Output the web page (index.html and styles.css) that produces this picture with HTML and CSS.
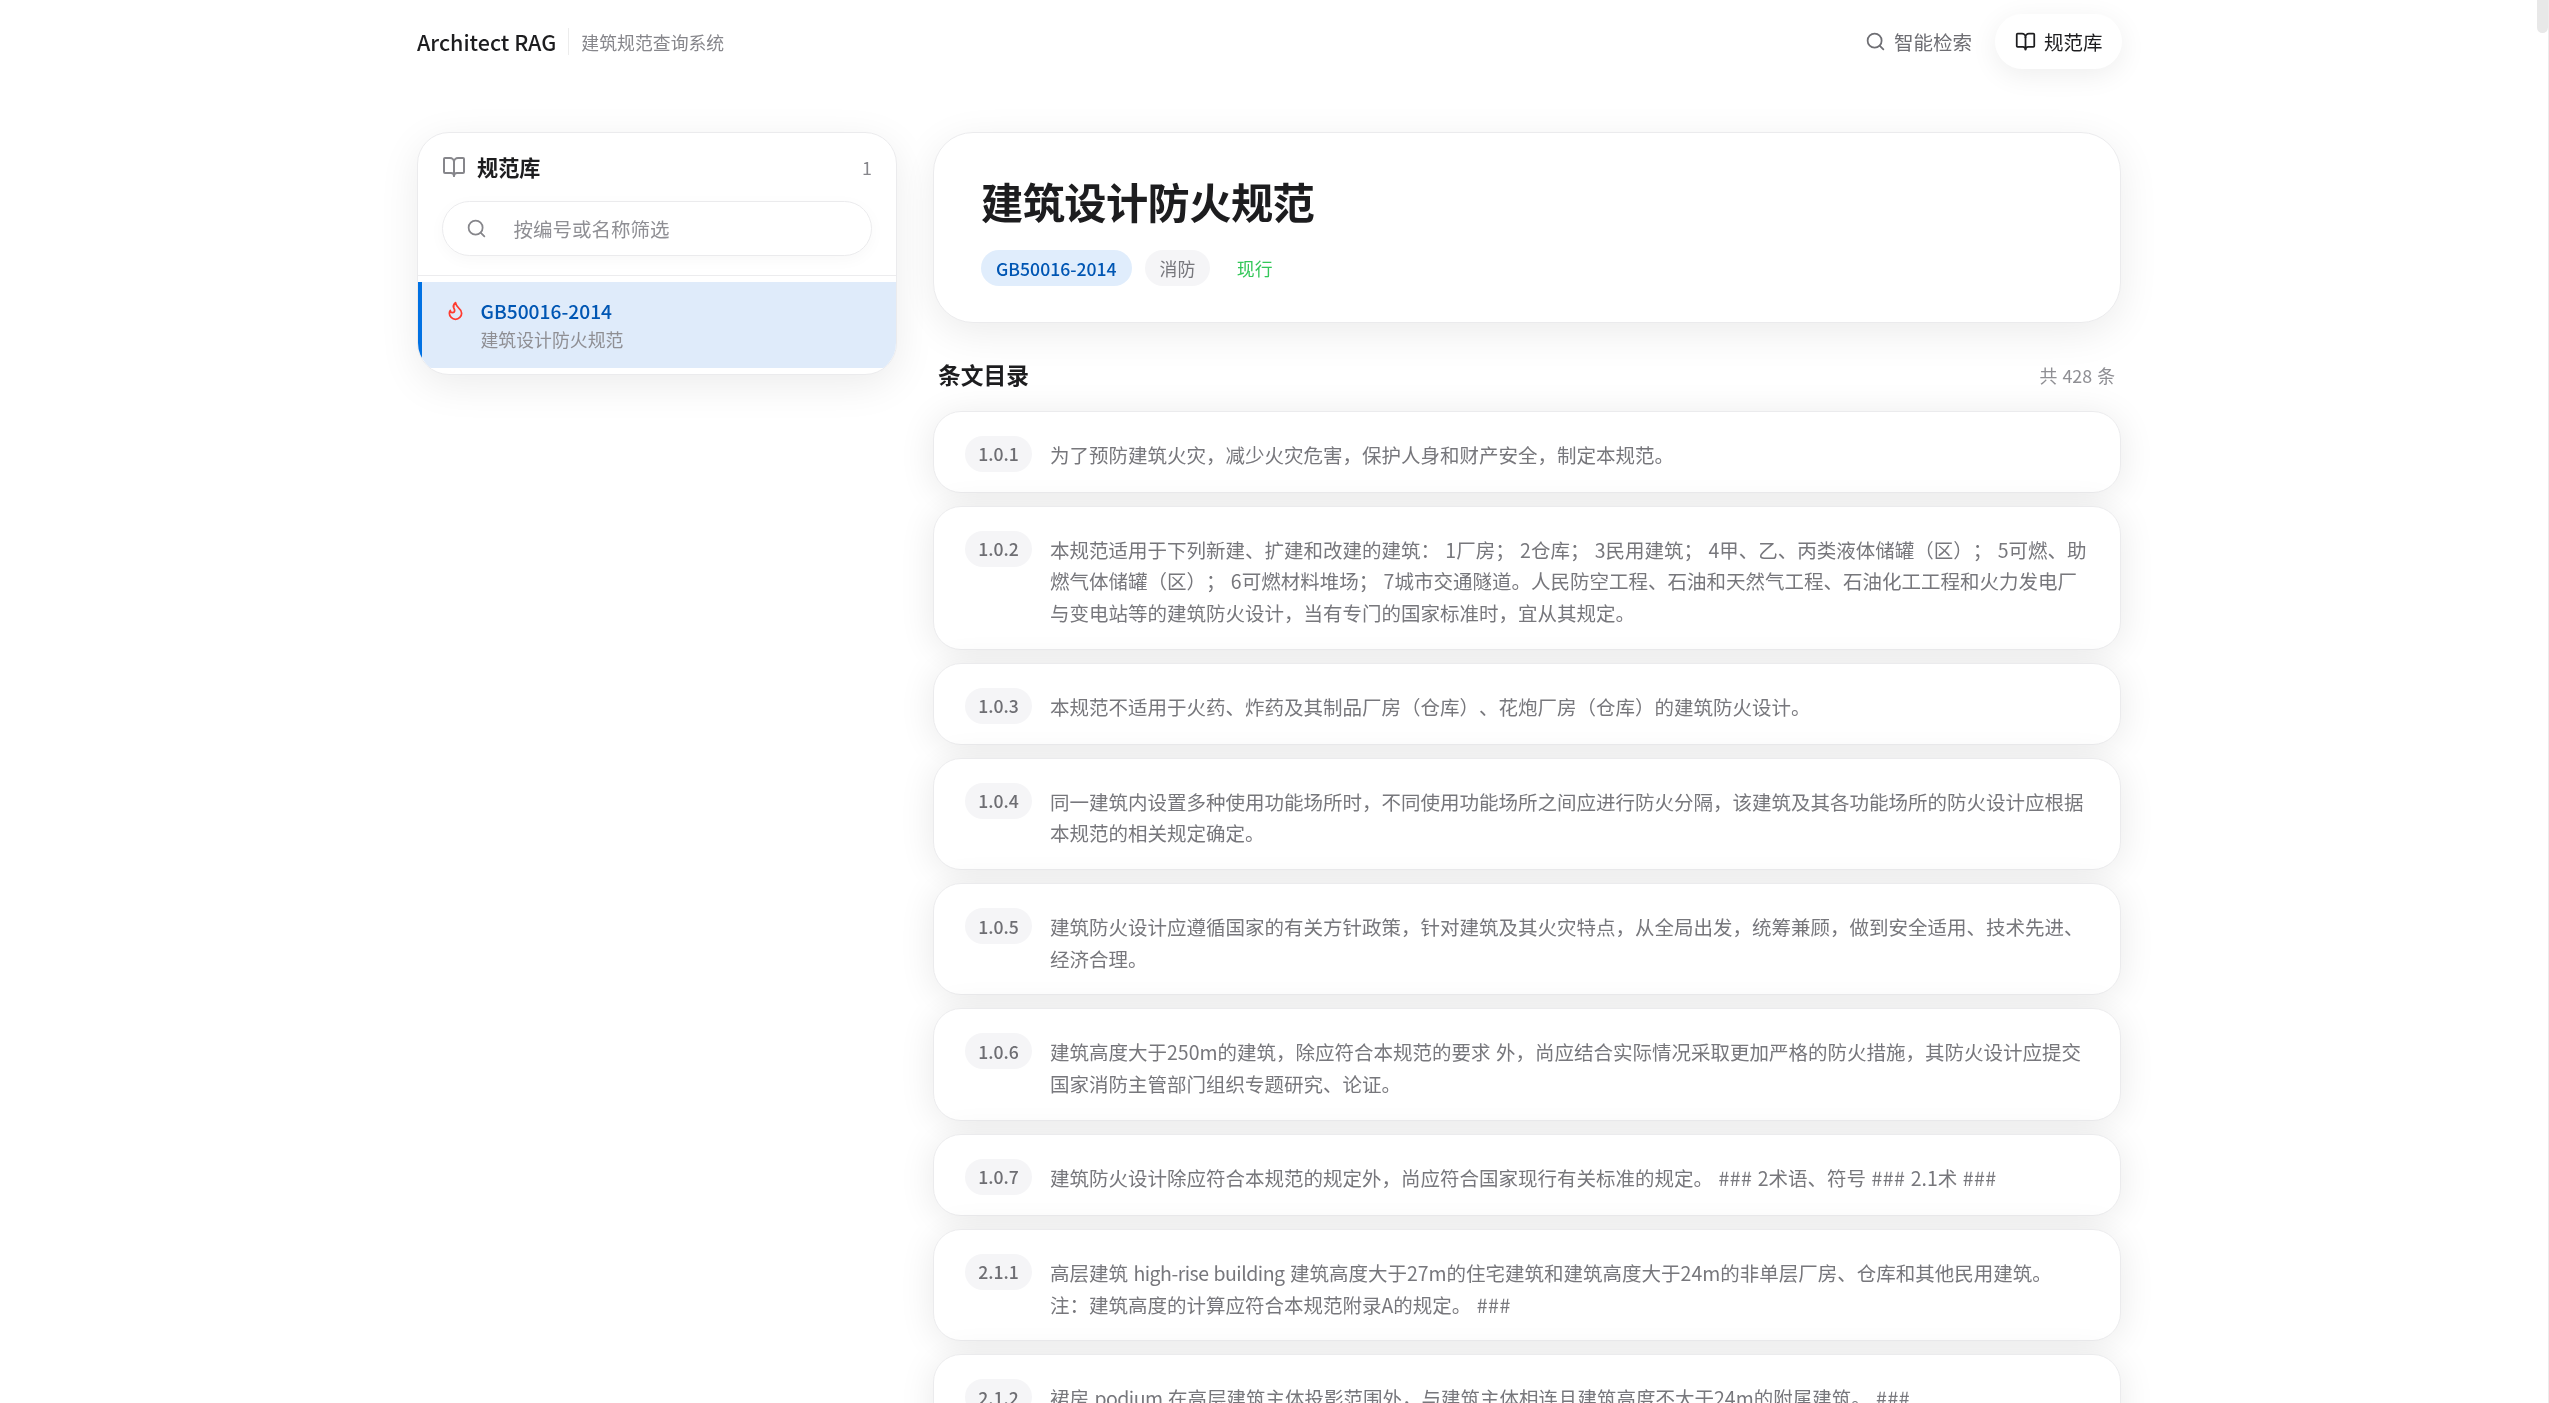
FILE: index.html
```html
<!DOCTYPE html>
<html lang="zh-CN">
<head>
<meta charset="utf-8">
<title>Architect RAG</title>
<link rel="stylesheet" href="styles.css">
</head>
<body>
<div class="scrollbar"><div class="scrollbar-thumb"></div></div>
<div class="page">
  <header class="topbar">
    <div class="brand">
      <span class="brand-name">Architect RAG</span>
      <span class="brand-sub">建筑规范查询系统</span>
    </div>
    <nav class="nav">
      <a class="nav-item">
        <svg class="icon icon-nav" viewBox="0 0 24 24"><circle cx="11" cy="11" r="8"/><path d="m21 21-4.3-4.3"/></svg>
        <span>智能检索</span>
      </a>
      <a class="nav-item nav-item-active">
        <svg class="icon icon-nav" viewBox="0 0 24 24"><path d="M12 7v14"/><path d="M3 18a1 1 0 0 1-1-1V4a1 1 0 0 1 1-1h5a4 4 0 0 1 4 4 4 4 0 0 1 4-4h5a1 1 0 0 1 1 1v13a1 1 0 0 1-1 1h-6a3 3 0 0 0-3 3 3 3 0 0 0-3-3z"/></svg>
        <span>规范库</span>
      </a>
    </nav>
  </header>

  <div class="layout">
    <aside class="side">
      <div class="side-head">
        <div class="side-title-row">
          <div class="side-title">
            <svg class="icon icon-side" viewBox="0 0 24 24"><path d="M12 7v14"/><path d="M3 18a1 1 0 0 1-1-1V4a1 1 0 0 1 1-1h5a4 4 0 0 1 4 4 4 4 0 0 1 4-4h5a1 1 0 0 1 1 1v13a1 1 0 0 1-1 1h-6a3 3 0 0 0-3 3 3 3 0 0 0-3-3z"/></svg>
            <span>规范库</span>
          </div>
          <span class="side-count">1</span>
        </div>
        <div class="filter">
          <svg class="icon icon-filter" viewBox="0 0 24 24"><circle cx="11" cy="11" r="8"/><path d="m21 21-4.3-4.3"/></svg>
          <span class="filter-placeholder">按编号或名称筛选</span>
        </div>
      </div>
      <div class="side-list">
        <div class="side-item">
          <svg class="icon icon-flame" viewBox="0 0 24 24"><path d="M8.5 14.5A2.5 2.5 0 0 0 11 12c0-1.38-.5-2-1-3-1.072-2.143-.224-4.054 2-6 .5 2.5 2 4.9 4 6.5 2 1.6 3 3.5 3 5.5a7 7 0 1 1-14 0c0-1.153.433-2.294 1-3a2.5 2.5 0 0 0 2.5 2.5z"/></svg>
          <div class="side-item-text">
            <div class="side-item-code">GB50016-2014</div>
            <div class="side-item-name">建筑设计防火规范</div>
          </div>
        </div>
      </div>
    </aside>

    <main class="main">
      <section class="hero">
        <h1 class="hero-title">建筑设计防火规范</h1>
        <div class="tags">
          <span class="tag tag-code">GB50016-2014</span>
          <span class="tag tag-cat">消防</span>
          <span class="tag tag-status">现行</span>
        </div>
      </section>

      <div class="toc-head">
        <h2 class="toc-title">条文目录</h2>
        <span class="toc-count">共 428 条</span>
      </div>

      <div class="rows">
        <article class="row"><span class="row-num">1.0.1</span><p class="row-text">为了预防建筑火灾，减少火灾危害，保护人身和财产安全，制定本规范。</p></article>
        <article class="row"><span class="row-num">1.0.2</span><p class="row-text">本规范适用于下列新建、扩建和改建的建筑： 1厂房； 2仓库； 3民用建筑； 4甲、乙、丙类液体储罐（区）； 5可燃、助燃气体储罐（区）； 6可燃材料堆场； 7城市交通隧道。人民防空工程、石油和天然气工程、石油化工工程和火力发电厂与变电站等的建筑防火设计，当有专门的国家标准时，宜从其规定。</p></article>
        <article class="row"><span class="row-num">1.0.3</span><p class="row-text">本规范不适用于火药、炸药及其制品厂房（仓库）、花炮厂房（仓库）的建筑防火设计。</p></article>
        <article class="row"><span class="row-num">1.0.4</span><p class="row-text">同一建筑内设置多种使用功能场所时，不同使用功能场所之间应进行防火分隔，该建筑及其各功能场所的防火设计应根据本规范的相关规定确定。</p></article>
        <article class="row"><span class="row-num">1.0.5</span><p class="row-text">建筑防火设计应遵循国家的有关方针政策，针对建筑及其火灾特点，从全局出发，统筹兼顾，做到安全适用、技术先进、经济合理。</p></article>
        <article class="row"><span class="row-num">1.0.6</span><p class="row-text">建筑高度大于250m的建筑，除应符合本规范的要求 外，尚应结合实际情况采取更加严格的防火措施，其防火设计应提交国家消防主管部门组织专题研究、论证。</p></article>
        <article class="row"><span class="row-num">1.0.7</span><p class="row-text">建筑防火设计除应符合本规范的规定外，尚应符合国家现行有关标准的规定。 <span class="row-mark">###</span> 2术语、符号 <span class="row-mark">###</span> 2.1术 <span class="row-mark">###</span></p></article>
        <article class="row"><span class="row-num">2.1.1</span><p class="row-text">高层建筑 <span class="row-latin">high-rise building</span> 建筑高度大于27m的住宅建筑和建筑高度大于24m的非单层厂房、仓库和其他民用建筑。<br>注：建筑高度的计算应符合本规范附录A的规定。 <span class="row-mark">###</span></p></article>
        <article class="row"><span class="row-num">2.1.2</span><p class="row-text">裙房 <span class="row-latin">podium</span> 在高层建筑主体投影范围外，与建筑主体相连且建筑高度不大于24m的附属建筑。 <span class="row-mark">###</span></p></article>
      </div>
    </main>
  </div>
</div>
</body>
</html>
```

FILE: styles.css
```css
* { box-sizing: border-box; }
html, body { margin: 0; height: 100%; overflow: hidden; background: #fff; }
body {
  font-family: "Noto Sans CJK SC", "Noto Sans", sans-serif;
  color: #1d1d1f;
  text-spacing-trim: space-all;
}
h1, h2, p { margin: 0; }

.scrollbar {
  position: fixed; top: 0; right: 0; bottom: 0; width: 12px;
  border-right: 1px solid #ececec;
}
.scrollbar-thumb { width: 11px; height: 33px; background: #e8e8e8; border-radius: 0 0 6px 6px; }

.page { width: 1704px; margin-left: 417px; filter: blur(.3px); }

.topbar { display: flex; align-items: center; justify-content: space-between; height: 84px; }
.brand { display: flex; align-items: center; margin-top: -1px; }
.brand-name { font-size: 21.5px; font-weight: 500; padding-right: 12px; border-right: 1px solid #ececec; line-height: 27px; }
.brand-sub { font-size: 17.88px; color: #86868b; padding-left: 12px; }

.nav { display: flex; align-items: center; gap: 4px; height: 55px; margin-top: -1px; margin-right: -1px; }
.nav-item { display: flex; align-items: center; gap: 8px; padding: 0 19.5px; height: 55px; border-radius: 28px; font-size: 19.5px; color: #6e6e73; }
.nav-item-active { color: #1d1d1f; background: #fff; box-shadow: 0 6px 28px rgba(0,0,0,.07); }

.icon { fill: none; stroke: currentColor; stroke-width: 2; stroke-linecap: round; stroke-linejoin: round; flex: none; }
.icon-nav { width: 21px; height: 21px; }

.layout { display: flex; gap: 36px; align-items: flex-start; margin-top: 48px; }

.side {
  width: 480px; flex: none; background: #fff; border: 1px solid #ebebed;
  border-radius: 32px; overflow: hidden; box-shadow: 0 10px 40px rgba(0,0,0,.08);
}
.side-head { padding: 20px 24px 19px; border-bottom: 1px solid #ececee; }
.side-title-row { display: flex; align-items: center; justify-content: space-between; height: 28px; }
.side-title { display: flex; align-items: center; gap: 11px; font-size: 21.13px; font-weight: 700; margin-top: -1px; }
.icon-side { width: 24px; height: 24px; color: #86868b; }
.side-count { font-size: 17.88px; color: #86868b; }
.filter {
  display: flex; align-items: center; height: 55px; margin-top: 20px;
  border: 1px solid #ebebed; border-radius: 28px; padding-left: 22.5px; gap: 27px;
  background: #fff; box-shadow: 0 4px 16px rgba(0,0,0,.03);
}
.icon-filter { width: 21px; height: 21px; color: #86868b; }
.filter-placeholder { font-size: 19.5px; color: #8f8f94; }

.side-list { padding: 6px 0 6px; }
.side-item {
  display: flex; gap: 15px; height: 86px; padding: 15px 0 0 22.5px;
  background: #dfebfa; border-left: 4px solid #0071e3;
}
.icon-flame { width: 21px; height: 21px; color: #ff3b30; margin-top: 3px; }
.side-item-code { font-size: 19.2px; font-weight: 500; color: #0056b3; line-height: 28px; }
.side-item-name { font-size: 17.88px; color: #8f8f94; line-height: 28px; }

.main { flex: 1; min-width: 0; }

.hero {
  height: 191px; padding: 38.5px 47px; background: #fff; border: 1px solid #ebebed;
  border-radius: 40px; box-shadow: 0 10px 40px rgba(0,0,0,.08);
}
.hero-title { font-size: 42.26px; font-weight: 700; line-height: 58px; letter-spacing: -.6px; }
.tags { display: flex; gap: 13px; margin-top: 20.5px; }
.tag { height: 36px; padding: 0 15px; border-radius: 18px; font-size: 17.88px; display: flex; align-items: center; }
.tag-code { background: #e0edfc; color: #0056b3; font-weight: 500; font-size: 17.6px; }
.tag-cat { background: #f5f5f7; color: #77777c; }
.tag-status { color: #34c759; padding: 0 13.5px; }

.toc-head { display: flex; align-items: center; justify-content: space-between; padding: 0 5px; margin-top: 35.5px; height: 32px; }
.toc-title { font-size: 22.76px; font-weight: 700; }
.toc-count { font-size: 17.88px; color: #8f8f94; word-spacing: 1px; margin-right: 1px; }

.rows { display: flex; flex-direction: column; gap: 13px; margin-top: 20px; }
.row {
  display: flex; gap: 18px; align-items: flex-start; padding: 24px 31px 20px; background: #fff;
  border: 1px solid #ebebed; border-radius: 28px; box-shadow: 0 4px 36px rgba(0,0,0,.09);
}
.row-num {
  flex: none; width: 67px; height: 36px; border-radius: 18px; background: #f5f5f7; color: #6e6e73;
  font-size: 17.6px; font-weight: 500; display: flex; align-items: center; justify-content: center;
}
.row-text { font-size: 19.5px; line-height: 31.7px; color: #77777c; margin-top: 3px; word-spacing: 1px; }
.row-latin { letter-spacing: -.5px; }
.row-mark { letter-spacing: .5px; }
```
